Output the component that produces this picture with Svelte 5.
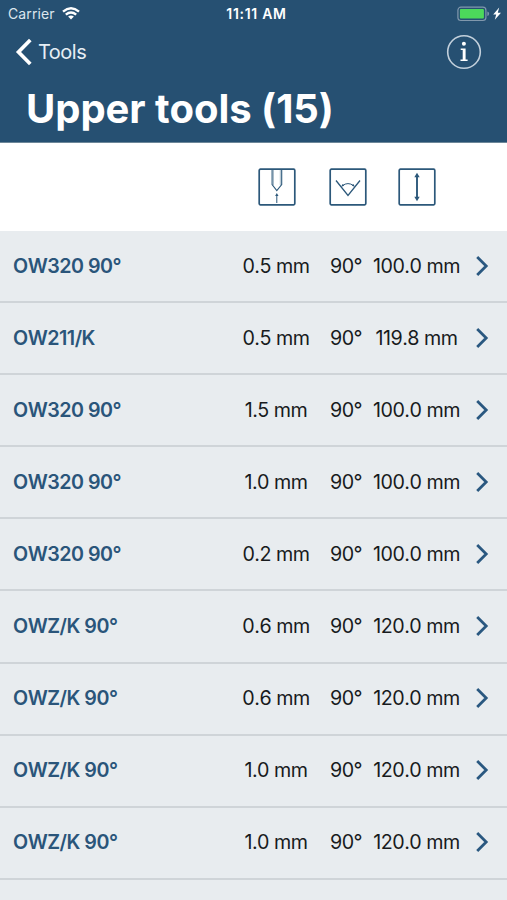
<script>
  const tools = [
    ['OW320 90°', '0.5 mm', '100.0 mm'],
    ['OW211/K', '0.5 mm', '119.8 mm'],
    ['OW320 90°', '1.5 mm', '100.0 mm'],
    ['OW320 90°', '1.0 mm', '100.0 mm'],
    ['OW320 90°', '0.2 mm', '100.0 mm'],
    ['OWZ/K 90°', '0.6 mm', '120.0 mm'],
    ['OWZ/K 90°', '0.6 mm', '120.0 mm'],
    ['OWZ/K 90°', '1.0 mm', '120.0 mm'],
    ['OWZ/K 90°', '1.0 mm', '120.0 mm']
  ];
</script>

<div class="screen">
  <header>
    <div class="status">
      <div class="carrier">
        <span>Carrier</span>
        <svg width="18" height="13" viewBox="0 0 18 13" fill="none" stroke="#fff" stroke-width="2.4">
          <path d="M1 4.6Q9-2.1 17 4.6M3.8 7.7Q9 3.4 14.2 7.7" />
          <path d="M6.1 9.5Q9 7.5 11.9 9.5L9 12.4Z" fill="#fff" stroke="none" />
        </svg>
      </div>
      <div class="time">11:11 AM</div>
      <div class="battery">
        <svg width="46" height="16" viewBox="0 0 46 16">
          <rect x=".9" y="1.2" width="28" height="13.3" rx="3" fill="none" stroke="#8198ad" stroke-width="1.2" />
          <rect x="2.9" y="3.1" width="24" height="9.5" rx="1" fill="#4cd95b" />
          <path d="M30.4 5.6Q32.1 6 32.1 7.8T30.4 10Z" fill="#8198ad" />
          <path d="M42.2 1.6 36.2 8.5H39.2L37.8 13.7 44 6.7H40.8Z" fill="#fff" />
        </svg>
      </div>
    </div>
    <nav>
      <div class="back">
        <svg width="17" height="28" viewBox="0 0 17 28" fill="none" stroke="#fff" stroke-width="3.7"><path d="M15.3 2 3.5 14 15.3 26" /></svg>
        <span>Tools</span>
      </div>
      <svg width="36" height="36" viewBox="0 0 36 36">
        <circle cx="18" cy="18" r="16.3" fill="none" stroke="#c3d0dc" stroke-width="1.6" />
        <circle cx="17.9" cy="9.8" r="2" fill="#fff" />
        <path d="M14.7 14.5H19.6V25.6H21.6V27H14.5V25.6H16.7V15.9H14.7Z" fill="#fff" />
      </svg>
    </nav>
    <h1>Upper tools (15)</h1>
  </header>

  <div class="row legend">
    <span class="name"></span>
    <span class="radius">
      <svg width="38" height="38" viewBox="0 0 38 38" fill="none" stroke="#2c587a">
        <rect x="1.2" y="1.2" width="35.6" height="35.6" rx="1.2" stroke-width="1.7" />
        <path d="M14.1 2V16.5L18.8 22.5 23.7 16.5V2" stroke-width="1.1" />
        <path d="M15.5 2V17M22.3 2V17" stroke-width=".4" />
        <path d="M18.8 27V35" stroke-width="1" />
        <path d="M17.1 28 18.8 25 20.5 28Z" fill="#2c587a" stroke="none" />
      </svg>
    </span>
    <span class="angle">
      <svg width="38" height="38" viewBox="0 0 38 38" fill="none" stroke="#2c587a">
        <rect x="1.2" y="1.2" width="35.6" height="35.6" rx="1.2" stroke-width="1.7" />
        <path d="M7 12.5 19 27.5 31 12.5" stroke-width="1.3" />
        <path d="M13.4 17.6Q19 13.6 24.6 17.6" stroke-width="1" />
        <path d="M12.2 18.7 13.5 15.9 15.3 17.7ZM25.8 18.7 24.5 15.9 22.7 17.7Z" fill="#2c587a" stroke="none" />
      </svg>
    </span>
    <span class="height">
      <svg width="38" height="38" viewBox="0 0 38 38" fill="none" stroke="#2c587a">
        <rect x="1.2" y="1.2" width="35.6" height="35.6" rx="1.2" stroke-width="1.7" />
        <path d="M19 7V31" stroke-width="1.9" />
        <path d="M16.3 9.3 19 4.8 21.7 9.3ZM16.3 28.7 19 33.2 21.7 28.7Z" fill="#2c587a" stroke="none" />
      </svg>
    </span>
  </div>

  <main>
    {#each tools as [name, radius, height]}
      <div class="row tool">
        <span class="name">{name}</span>
        <span class="radius">{radius}</span>
        <span class="angle">90°</span>
        <span class="height">{height}</span>
        <svg class="chevron" width="14" height="22" viewBox="0 0 14 22" fill="none" stroke="#2a5880" stroke-width="2.8"><path d="M2.2 2 11.2 11 2.2 20" /></svg>
      </div>
    {/each}
  </main>
</div>

<style>
  :global(body) { margin: 0; }
  .screen {
    width: 507px;
    height: 900px;
    overflow: hidden;
    background: #e8ecef;
    font-family: Inter, "Liberation Sans", sans-serif;
    white-space: nowrap;
  }
  svg { display: block; flex: none; }
  header {
    box-sizing: border-box;
    height: 143px;
    background: #265072;
    border-bottom: 1px solid #6d8799;
    color: #fff;
  }
  .status {
    display: grid;
    grid-template-columns: 1fr 100px 1fr;
    height: 27px;
    padding: 0 4px 0 8px;
    align-items: center;
  }
  .carrier { display: flex; align-items: center; gap: 7px; color: #dce6ee; font-size: 14px; letter-spacing: .1px; }
  .time { padding-left: 2px; text-align: center; font-size: 14px; font-weight: 600; letter-spacing: .7px; }
  .battery { display: flex; justify-content: flex-end; }
  nav {
    display: flex;
    justify-content: space-between;
    align-items: center;
    height: 50px;
    padding: 0 25px 0 15px;
  }
  .back { display: flex; align-items: center; gap: 6px; color: #e6eef5; font-size: 20px; letter-spacing: -.5px; }
  h1 { margin: 0; padding-left: 26px; font-size: 40px; line-height: 64px; font-weight: 700; letter-spacing: -.05px; font-kerning: none; }
  .row {
    display: grid;
    grid-template-columns: 228px 70px 70px 71px 1fr;
    padding-left: 13px;
    box-sizing: border-box;
    align-items: center;
  }
  .legend { height: 88px; background: #fff; }
  .legend .radius, .legend .angle, .legend .height { display: flex; justify-content: center; }
  .legend .radius { padding-left: 2px; }
  .legend .angle { padding-left: 3px; }
  .legend .height { padding-left: 1px; }
  .tool {
    height: 72.1px;
    padding-bottom: .7px;
    border-bottom: 2px solid #cfd4d8;
    font-size: 19.7px;
    letter-spacing: -.5px;
    font-kerning: none;
    color: #181b1d;
  }
  .name { color: #2a557a; font-weight: 600; }
  .tool .radius, .tool .angle, .tool .height { justify-self: center; }
  .chevron { margin-left: 23px; }
</style>
